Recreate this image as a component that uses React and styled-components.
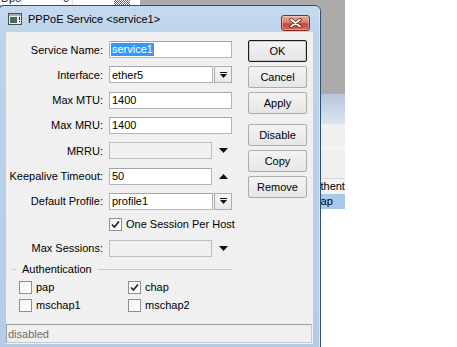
import React from 'react'
import styled, { createGlobalStyle } from 'styled-components'

const GlobalStyle = createGlobalStyle`
  html, body {
    margin: 0;
    padding: 0;
    background: #fff;
  }
  body {
    font-family: "Liberation Sans", Arial, sans-serif;
    font-size: 11px;
    color: #000;
  }
`

const Desktop = styled.div`
  position: relative;
  width: 457px;
  height: 347px;
  overflow: hidden;
  background: #fff;
`

/* ---------- application behind the dialog ---------- */

const BackWindow = styled.div`
  position: absolute;
  left: 0;
  top: 0;
  width: 345px;
  height: 347px;
  display: flex;
  flex-direction: column;
  overflow: hidden;
`

const BackTop = styled.div`
  height: 94px;
  background: #ababab;
  display: flex;
  align-items: flex-start;
`

const TableStrip = styled.div`
  width: 140px;
  height: 5px;
  background: #fff;
  display: flex;
  overflow: hidden;
`

const StripCell = styled.div`
  width: ${p => p.$w}px;
  height: 5px;
  overflow: hidden;
  box-sizing: border-box;
  border-right: 1px solid #dcdcdc;
  text-align: ${p => p.$align || 'left'};
  padding: 0 3px 0 1px;
  color: #222;

  span {
    display: block;
    line-height: 11px;
    margin-top: -7px;
  }
`

const Checker = styled.div`
  width: 16px;
  height: 5px;
  margin-left: 4px;
  background: repeating-conic-gradient(#6a6a6a 0 25%, #fff 0 50%) 0 0 / 2px 2px;
`

const HeaderBand = styled.div`
  height: 30px;
  background: linear-gradient(to bottom, #b4c6dc, #dbe5ef);
`

const BackRow = styled.div`
  height: ${p => p.$h}px;
  background: ${p => p.$bg || '#f0f0f0'};
  border-top: ${p => (p.$line ? `1px solid ${p.$line}` : 'none')};
  white-space: nowrap;
  overflow: hidden;
  padding-left: ${p => p.$indent || 0}px;
  line-height: ${p => p.$h}px;
`

const BackFill = styled.div`
  flex: 1;
  background: #fff;
`

/* ---------- dialog ---------- */

const Window = styled.div`
  position: absolute;
  left: -2px;
  top: 5px;
  width: 323px;
  height: 347px;
  box-sizing: border-box;
  border: 1px solid #2f4f72;
  border-radius: 6px 6px 0 0;
  background: linear-gradient(to bottom, #c6d9ee 0, #bcd3eb 30px, #b3cde9 100%);
  box-shadow: inset 1px 0 0 #dce9f6, inset -1px 0 0 #dce9f6;
  padding: 0 7px 7px 7px;
  display: flex;
  flex-direction: column;
`

const TitleBar = styled.div`
  height: 26px;
  display: flex;
  align-items: center;
`

const TitleIcon = styled.svg`
  margin-left: 2px;
  flex: none;
`

const TitleText = styled.span`
  margin-left: 6px;
  font-size: 11px;
  color: #000;
  white-space: nowrap;
`

const CloseButton = styled.div`
  margin-left: auto;
  margin-right: 3px;
  align-self: flex-end;
  margin-bottom: 1px;
  width: 29px;
  height: 16px;
  box-sizing: border-box;
  border: 1px solid #7b2f25;
  border-radius: 3px;
  background: linear-gradient(to bottom, #e9a99b 0, #d9826f 45%, #c24b36 55%, #cf6a50 100%);
  box-shadow: inset 0 0 0 1px rgba(255, 255, 255, 0.35);
  display: flex;
  align-items: center;
  justify-content: center;
`

const Client = styled.div`
  flex: 1;
  background: #f0f0f0;
  display: flex;
  flex-direction: column;
`

const Main = styled.div`
  display: flex;
  gap: 16px;
  padding-top: 8px;
`

const FormCol = styled.div`
  width: 226px;
  padding-top: 1px;
  display: flex;
  flex-direction: column;
`

const FormRow = styled.div`
  display: grid;
  grid-template-columns: 97px 123px;
  column-gap: 6px;
  align-items: center;
  height: ${p => p.$h || 17}px;
  margin-top: ${p => p.$mt || 0}px;
`

const Label = styled.span`
  text-align: right;
  white-space: nowrap;
`

const Field = styled.div`
  box-sizing: border-box;
  height: 17px;
  flex: 1;
  min-width: 0;
  border: 1px solid #b3b5ba;
  border-top-color: #a3a5aa;
  background: ${p => (p.$disabled ? '#f0f0f0' : '#fff')};
  ${p => p.$disabled && 'border-color: #bcbcbc;'}
  padding: 0 2px;
  display: flex;
  align-items: center;
  white-space: nowrap;
  overflow: hidden;
`

const Selected = styled.span`
  background: #3399ff;
  color: #fff;
  line-height: 13px;
  margin-left: -1px;
  padding: 0 1px;
`

const FieldWrap = styled.div`
  display: flex;
  gap: 1px;
  height: 17px;
`

const DropButton = styled.div`
  width: 18px;
  height: 17px;
  box-sizing: border-box;
  border: 1px solid #adadad;
  background: linear-gradient(to bottom, #f6f6f6, #e8e8e8);
  display: flex;
  align-items: center;
  justify-content: center;
  flex: none;
`

const ArrowSlot = styled.div`
  width: 18px;
  flex: none;
  display: flex;
  align-items: center;
  justify-content: center;
  padding-left: 1px;
`

const CheckItem = styled.label`
  display: flex;
  align-items: center;
  gap: 4px;
  white-space: nowrap;
`

const Box = styled.span`
  width: 13px;
  height: 13px;
  box-sizing: border-box;
  border: 1px solid #8e8f8f;
  background: linear-gradient(135deg, #f2f2f2, #ffffff);
  display: flex;
  align-items: center;
  justify-content: center;
  flex: none;
`

const GroupHeader = styled.div`
  display: flex;
  align-items: center;
  height: 13px;
  width: 220px;
  margin-left: 6px;
  margin-top: ${p => p.$mt || 0}px;

  &::before,
  &::after {
    content: '';
    height: 1px;
    background: #c9c9c9;
  }
  &::before {
    width: 4px;
  }
  &::after {
    flex: 1;
  }

  span {
    padding: 0 6px;
  }
`

const CheckGrid = styled.div`
  display: grid;
  grid-template-columns: 109px auto;
  padding-left: 13px;
  height: 13px;
  margin-top: ${p => p.$mt || 0}px;
`

const ButtonCol = styled.div`
  width: 59px;
  display: flex;
  flex-direction: column;
  gap: 4px;
`

const Button = styled.div`
  height: 22px;
  box-sizing: border-box;
  border: 1px solid ${p => (p.$default ? '#1c1c1c' : '#acacac')};
  border-radius: 2px;
  background: linear-gradient(to bottom, #f3f3f3, #e6e6e6);
  box-shadow: ${p => (p.$default ? 'inset 0 0 0 1px #c9c9c9' : 'none')};
  display: flex;
  align-items: center;
  justify-content: center;
  margin-top: ${p => p.$mt || 0}px;
`

const StatusBar = styled.div`
  margin-top: auto;
  margin-right: 1px;
  margin-bottom: 1px;
  height: 19px;
  box-sizing: border-box;
  border: 1px solid #c8c8c8;
  border-top-color: #a0a0a0;
  border-left-color: #a0a0a0;
  color: #6d6d6d;
  padding-left: 1px;
  display: flex;
  align-items: center;
`

const DropIcon = () => (
  <svg width="7" height="6" viewBox="0 0 7 6">
    <rect x="0" y="0" width="7" height="1" fill="#111" />
    <polygon points="0,2 7,2 3.5,6" fill="#111" />
  </svg>
)

const Triangle = ({ up }) => (
  <svg width="9" height="5" viewBox="0 0 9 5">
    <polygon points={up ? '0,5 9,5 4.5,0' : '0,0 9,0 4.5,5'} fill="#111" />
  </svg>
)

const Tick = () => (
  <svg width="9" height="9" viewBox="0 0 9 9">
    <path d="M1 4.5 L3.4 7 L8 1.5" fill="none" stroke="#222" strokeWidth="1.7" />
  </svg>
)

const Check = ({ checked, children }) => (
  <CheckItem>
    <Box>{checked && <Tick />}</Box>
    <span>{children}</span>
  </CheckItem>
)

const Combo = ({ value, arrow, disabled }) => (
  <FieldWrap>
    <Field $disabled={disabled}>{value}</Field>
    {arrow === 'drop' && (
      <DropButton>
        <DropIcon />
      </DropButton>
    )}
    {arrow === 'down' && (
      <ArrowSlot>
        <Triangle />
      </ArrowSlot>
    )}
    {arrow === 'up' && (
      <ArrowSlot>
        <Triangle up />
      </ArrowSlot>
    )}
  </FieldWrap>
)

export default function App() {
  const gap = 8.33
  return (
    <>
      <GlobalStyle />
      <Desktop>
        <BackWindow>
          <BackTop>
            <TableStrip>
              <StripCell $w={22}><span>Dpo</span></StripCell>
              <StripCell $w={51} $align="right"><span>0</span></StripCell>
              <Checker style={{ marginLeft: 41 }} />
            </TableStrip>
          </BackTop>
          <HeaderBand />
          <BackRow $h={23} />
          <BackRow $h={30} $line="#fafafa" />
          <BackRow $h={15} $line="#d6d6d6" $bg="#f4f4f4" $indent={307}>Authentication</BackRow>
          <BackRow $h={15} $bg="#a9c8ec" $indent={309}>chap</BackRow>
          <BackFill />
        </BackWindow>

        <Window>
          <TitleBar>
            <TitleIcon width="14" height="12" viewBox="0 0 14 12">
              <rect x="0.5" y="0.5" width="13" height="11" fill="#ececec" stroke="#505050" />
              <rect x="1" y="1" width="12" height="2" fill="#a7b0b8" />
              <rect x="2" y="4" width="7" height="6" fill="#3d6e60" />
              <rect x="11" y="4" width="1" height="3" fill="#333" />
              <rect x="11" y="8" width="1" height="1" fill="#333" />
            </TitleIcon>
            <TitleText>PPPoE Service &lt;service1&gt;</TitleText>
            <CloseButton>
              <svg width="13" height="10" viewBox="0 0 13 10">
                <path d="M2 1.5 L11 8.5 M11 1.5 L2 8.5" stroke="#5b1c13" strokeWidth="3.4" strokeLinecap="round" />
                <path d="M2 1.5 L11 8.5 M11 1.5 L2 8.5" stroke="#fff" strokeWidth="1.8" strokeLinecap="round" />
              </svg>
            </CloseButton>
          </TitleBar>

          <Client>
            <Main>
              <FormCol>
                <FormRow>
                  <Label>Service Name:</Label>
                  <Field><Selected>service1</Selected></Field>
                </FormRow>
                <FormRow $mt={gap}>
                  <Label>Interface:</Label>
                  <Combo value="ether5" arrow="drop" />
                </FormRow>
                <FormRow $mt={gap}>
                  <Label>Max MTU:</Label>
                  <Field>1400</Field>
                </FormRow>
                <FormRow $mt={gap}>
                  <Label>Max MRU:</Label>
                  <Field>1400</Field>
                </FormRow>
                <FormRow $mt={gap}>
                  <Label>MRRU:</Label>
                  <Combo arrow="down" disabled />
                </FormRow>
                <FormRow $mt={gap}>
                  <Label>Keepalive Timeout:</Label>
                  <Combo value="50" arrow="up" />
                </FormRow>
                <FormRow $mt={gap}>
                  <Label>Default Profile:</Label>
                  <Combo value="profile1" arrow="drop" />
                </FormRow>
                <FormRow $mt={8} $h={13}>
                  <span />
                  <Check checked>One Session Per Host</Check>
                </FormRow>
                <FormRow $mt={9}>
                  <Label>Max Sessions:</Label>
                  <Combo arrow="down" disabled />
                </FormRow>

                <GroupHeader $mt={6}>
                  <span>Authentication</span>
                </GroupHeader>
                <CheckGrid $mt={5}>
                  <Check>pap</Check>
                  <Check checked>chap</Check>
                </CheckGrid>
                <CheckGrid $mt={5}>
                  <Check>mschap1</Check>
                  <Check>mschap2</Check>
                </CheckGrid>
              </FormCol>

              <ButtonCol>
                <Button $default>OK</Button>
                <Button>Cancel</Button>
                <Button>Apply</Button>
                <Button $mt={6}>Disable</Button>
                <Button>Copy</Button>
                <Button>Remove</Button>
              </ButtonCol>
            </Main>

            <StatusBar>disabled</StatusBar>
          </Client>
        </Window>
      </Desktop>
    </>
  )
}
